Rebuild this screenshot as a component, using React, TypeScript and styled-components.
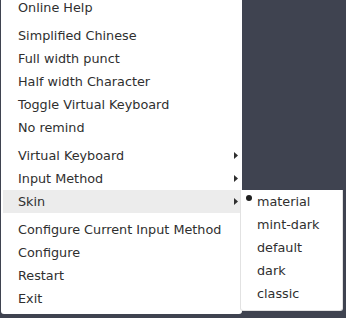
import styled, { createGlobalStyle } from "styled-components";

const GlobalStyle = createGlobalStyle`
  html, body {
    margin: 0;
    padding: 0;
    background: #3f4350;
    overflow: hidden;
  }
  body {
    font-family: "DejaVu Sans", "Liberation Sans", sans-serif;
  }
`;

type Entry = { label: string; sub?: boolean; active?: boolean };

const groups: Entry[][] = [
  [{ label: "Online Help" }],
  [
    { label: "Simplified Chinese" },
    { label: "Full width punct" },
    { label: "Half width Character" },
    { label: "Toggle Virtual Keyboard" },
    { label: "No remind" },
  ],
  [
    { label: "Virtual Keyboard", sub: true },
    { label: "Input Method", sub: true },
    { label: "Skin", sub: true, active: true },
  ],
  [
    { label: "Configure Current Input Method" },
    { label: "Configure" },
    { label: "Restart" },
    { label: "Exit" },
  ],
];

const skins = ["material", "mint-dark", "default", "dark", "classic"];

const Arrow = () => (
  <ArrowSvg width="4" height="7" viewBox="0 0 4 7">
    <path d="M0 0 L4 3.5 L0 7 Z" fill="#2f2f2f" />
  </ArrowSvg>
);

const App = () => {
  return (
    <>
      <GlobalStyle />
      <Screen>
        <Menu>
          {groups.map((group, gi) => (
            <Group key={gi}>
              {group.map((item) => (
                <Item key={item.label} $active={item.active}>
                  <Label>{item.label}</Label>
                  {item.sub && <Arrow />}
                </Item>
              ))}
            </Group>
          ))}
        </Menu>
        <SubMenu>
          {skins.map((skin, i) => (
            <SubItem key={skin}>
              <Bullet $on={i === 0} />
              <Label>{skin}</Label>
            </SubItem>
          ))}
        </SubMenu>
      </Screen>
    </>
  );
};

export default App;

const Screen = styled.div`
  position: relative;
  width: 346px;
  height: 318px;
  overflow: hidden;
`;

const Menu = styled.div`
  display: flex;
  flex-direction: column;
  gap: 5px;
  width: 241px;
  margin-left: 1px;
  margin-top: -8px;
  padding: 4px 0;
  background: #ffffff;
  border-radius: 0 0 3px 3px;
`;

const Group = styled.div`
  display: flex;
  flex-direction: column;
`;

const Item = styled.div<{ $active?: boolean }>`
  display: flex;
  align-items: center;
  justify-content: space-between;
  height: 23px;
  margin: 0 1px 0 2px;
  padding: 0 3px 0 15px;
  background: ${(p) => (p.$active ? "#ececec" : "transparent")};
`;

const Label = styled.span`
  color: #2f2f2f;
  font-size: 12.8px;
  line-height: 23px;
  white-space: nowrap;
`;

const ArrowSvg = styled.svg`
  display: block;
  margin-top: -1px;
`;

const SubMenu = styled.div`
  position: absolute;
  left: 240px;
  top: 190px;
  width: 101px;
  padding: 0 0 5px;
  background: #ffffff;
  border: 1px solid #e2e2e2;
  border-top: none;
  border-radius: 0 0 3px 3px;
  display: flex;
  flex-direction: column;
`;

const SubItem = styled.div`
  display: flex;
  align-items: center;
  height: 23px;
  padding-left: 5px;
  gap: 5px;
`;

const Bullet = styled.span<{ $on: boolean }>`
  width: 6px;
  height: 6px;
  border-radius: 50%;
  margin-top: -8px;
  background: ${(p) => (p.$on ? "#1f1f1f" : "transparent")};
`;
